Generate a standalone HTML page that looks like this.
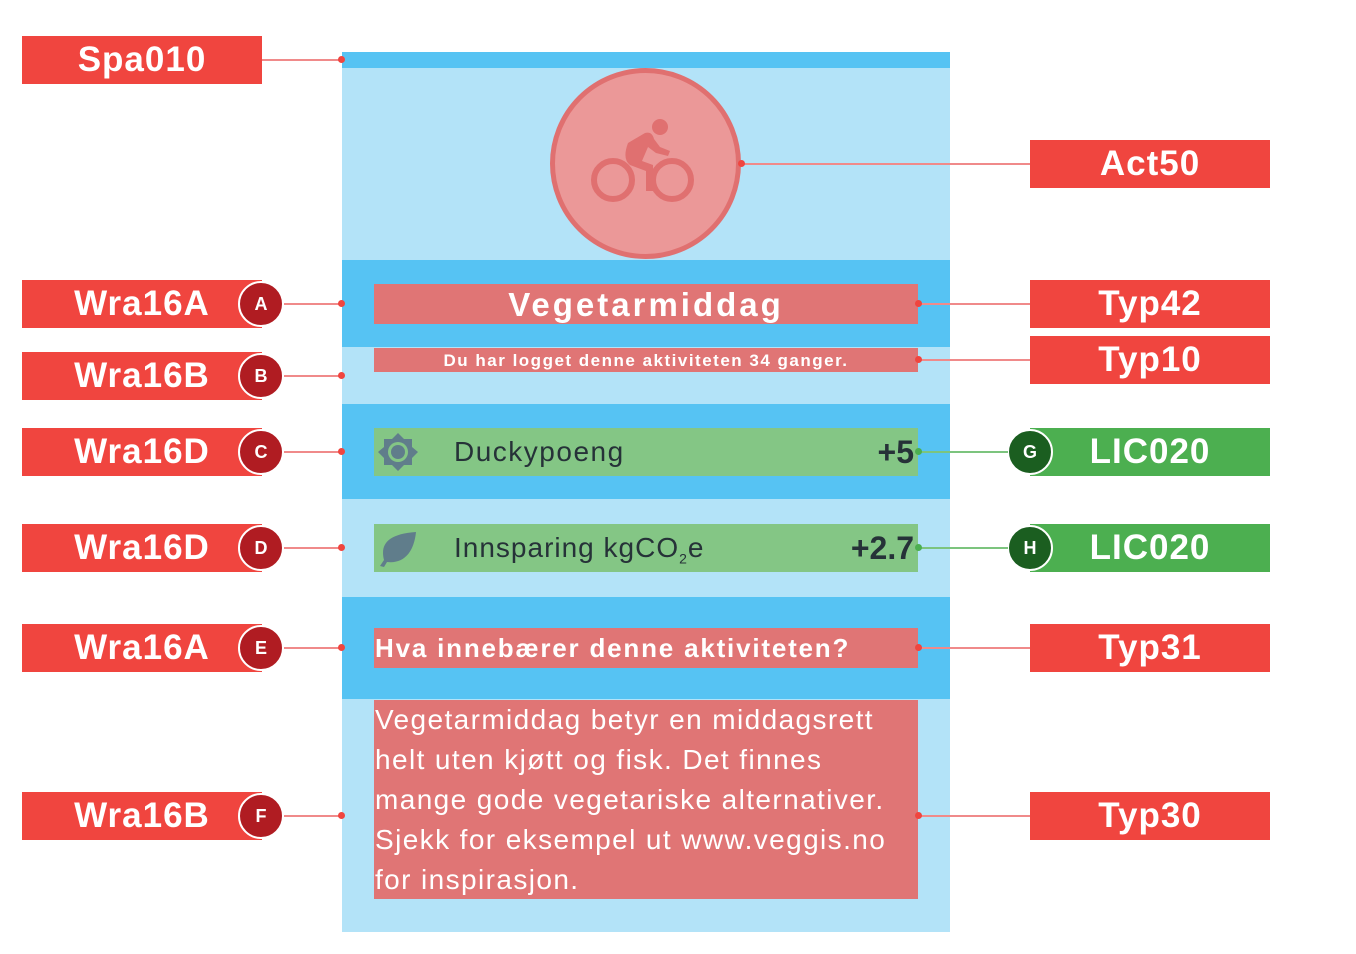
<!DOCTYPE html><html><head><style>
body{margin:0;width:1356px;height:954px;background:#fff;position:relative;overflow:hidden;font-family:"Liberation Sans",sans-serif;}
div{position:absolute;box-sizing:border-box}
.lab{width:240px;height:48px;background:#f0453f;color:#fff;font-weight:bold;font-size:35px;line-height:48px;text-align:center;letter-spacing:1px}
.g{background:#4caf50}
.c{width:46px;height:46px;border-radius:50%;background:#b01c22;border:2px solid #fff;color:#fff;font-weight:bold;font-size:18px;line-height:42px;text-align:center;}
.cg{background:#1b5e20}
.ln{height:2px;background:#f08a8a}
.lg{background:#7cc47e}
.dot{width:7px;height:7px;border-radius:50%;background:#f0453f}
.dg{background:#4caf50}
.rb{background:#e07575;color:#fff;font-weight:bold}
.gb{background:#84c685;color:#263238;font-size:28px;line-height:48px}
</style></head><body>
<div style="left:342px;top:52px;width:608px;height:880px;background:#b3e3f8"></div>
<div style="left:342px;top:52px;width:608px;height:16px;background:#56c3f3"></div>
<div style="left:342px;top:260px;width:608px;height:87px;background:#56c3f3"></div>
<div style="left:342px;top:404px;width:608px;height:95px;background:#56c3f3"></div>
<div style="left:342px;top:597px;width:608px;height:102px;background:#56c3f3"></div>
<div style="left:550px;top:68px;width:191px;height:191px;border-radius:50%;background:#eb9898;border:5px solid #e07070"></div>
<svg style="position:absolute;left:590px;top:113px" width="110" height="100" viewBox="0 0 110 100">
<g fill="none" stroke="#e07070" stroke-width="6"><circle cx="23" cy="67" r="19"/><circle cx="82" cy="67" r="19"/></g>
<circle cx="70" cy="14" r="8" fill="#e07070"/>
<path d="M38 30 L55 20 Q62 18 64 26 L70 34 L80 38 L78 43 L66 40 L58 34 L52 48 L63 52 L63 78 L56 78 L56 58 L40 52 Q32 46 38 30Z" fill="#e07070"/>
</svg>
<div class="rb" style="left:374px;top:284px;width:544px;height:40px;font-size:33px;line-height:42px;text-align:center;letter-spacing:3px">Vegetarmiddag</div>
<div class="rb" style="left:374px;top:348px;width:544px;height:24px;font-size:17px;line-height:25px;text-align:center;letter-spacing:1.5px">Du har logget denne aktiviteten 34 ganger.</div>
<div class="gb" style="left:374px;top:428px;width:544px;height:48px"><span style="position:absolute;left:80px;letter-spacing:1.5px">Duckypoeng</span><b style="position:absolute;right:4px;font-size:32px">+5</b>
<svg style="position:absolute;left:2px;top:3px" width="44" height="42" viewBox="0 0 44 42"><path d="M22 2 L28 8 L36 8 L36 16 L42 21 L36 27 L36 34 L28 34 L22 40 L16 34 L8 34 L8 27 L2 21 L8 16 L8 8 L16 8Z" fill="#607d8b"/><circle cx="22" cy="21" r="10" fill="#84c685"/><circle cx="22" cy="21" r="7" fill="#607d8b"/></svg></div>
<div class="gb" style="left:374px;top:524px;width:544px;height:48px"><span style="position:absolute;left:80px;letter-spacing:1px">Innsparing kgCO<sub style="font-size:14px">2</sub>e</span><b style="position:absolute;right:4px;font-size:32px">+2.7</b>
<svg style="position:absolute;left:4px;top:6px" width="42" height="38" viewBox="0 0 42 38"><path d="M38 2 C10 4 2 14 6 30 L2 36 L6 37 L9 32 C26 34 36 22 38 2Z" fill="#607d8b"/></svg></div>
<div class="rb" style="left:374px;top:628px;width:544px;height:40px;font-size:26px;line-height:40px;padding-left:1px;letter-spacing:1.8px;white-space:nowrap">Hva innebærer denne aktiviteten?</div>
<div class="rb" style="left:374px;top:700px;width:544px;height:199px;font-size:28px;line-height:40px;font-weight:normal;padding-left:1px;white-space:nowrap;letter-spacing:1.4px">Vegetarmiddag betyr en middagsrett<br>helt uten kjøtt og fisk. Det finnes<br>mange gode vegetariske alternativer.<br>Sjekk for eksempel ut www.veggis.no<br>for inspirasjon.</div>

<div class="lab" style="left:22px;top:36px">Spa010</div>
<div class="ln" style="left:262px;top:59px;width:80px"></div><div class="dot" style="left:338px;top:56px"></div>
<div class="lab" style="left:22px;top:280px">Wra16A</div><div class="c" style="left:238px;top:281px">A</div>
<div class="ln" style="left:284px;top:303px;width:58px"></div><div class="dot" style="left:338px;top:300px"></div>
<div class="lab" style="left:22px;top:352px">Wra16B</div><div class="c" style="left:238px;top:353px">B</div>
<div class="ln" style="left:284px;top:375px;width:58px"></div><div class="dot" style="left:338px;top:372px"></div>
<div class="lab" style="left:22px;top:428px">Wra16D</div><div class="c" style="left:238px;top:429px">C</div>
<div class="ln" style="left:284px;top:451px;width:58px"></div><div class="dot" style="left:338px;top:448px"></div>
<div class="lab" style="left:22px;top:524px">Wra16D</div><div class="c" style="left:238px;top:525px">D</div>
<div class="ln" style="left:284px;top:547px;width:58px"></div><div class="dot" style="left:338px;top:544px"></div>
<div class="lab" style="left:22px;top:624px">Wra16A</div><div class="c" style="left:238px;top:625px">E</div>
<div class="ln" style="left:284px;top:647px;width:58px"></div><div class="dot" style="left:338px;top:644px"></div>
<div class="lab" style="left:22px;top:792px">Wra16B</div><div class="c" style="left:238px;top:793px">F</div>
<div class="ln" style="left:284px;top:815px;width:58px"></div><div class="dot" style="left:338px;top:812px"></div>

<div class="lab" style="left:1030px;top:140px">Act50</div>
<div class="ln" style="left:741px;top:163px;width:289px"></div><div class="dot" style="left:738px;top:160px"></div>
<div class="lab" style="left:1030px;top:280px">Typ42</div>
<div class="ln" style="left:918px;top:303px;width:112px"></div><div class="dot" style="left:915px;top:300px"></div>
<div class="lab" style="left:1030px;top:336px">Typ10</div>
<div class="ln" style="left:918px;top:359px;width:112px"></div><div class="dot" style="left:915px;top:356px"></div>
<div class="lab g" style="left:1030px;top:428px">LIC020</div><div class="c cg" style="left:1007px;top:429px">G</div>
<div class="ln lg" style="left:918px;top:451px;width:90px"></div><div class="dot dg" style="left:915px;top:448px"></div>
<div class="lab g" style="left:1030px;top:524px">LIC020</div><div class="c cg" style="left:1007px;top:525px">H</div>
<div class="ln lg" style="left:918px;top:547px;width:90px"></div><div class="dot dg" style="left:915px;top:544px"></div>
<div class="lab" style="left:1030px;top:624px">Typ31</div>
<div class="ln" style="left:918px;top:647px;width:112px"></div><div class="dot" style="left:915px;top:644px"></div>
<div class="lab" style="left:1030px;top:792px">Typ30</div>
<div class="ln" style="left:918px;top:815px;width:112px"></div><div class="dot" style="left:915px;top:812px"></div>
</body></html>
